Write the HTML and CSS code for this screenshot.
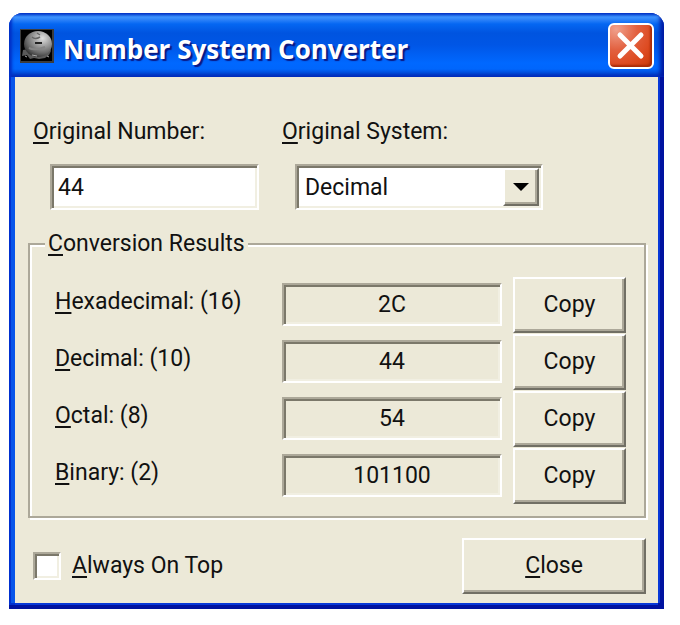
FILE: index.html
```html
<!DOCTYPE html>
<html lang="en">
<head>
  <meta charset="UTF-8">
  <title>Number System Converter</title>
  <meta name="viewport" content="width=device-width, initial-scale=1.0">
  <link rel="stylesheet" href="styles.css">
</head>
<body>
  <main class="window">
    <header class="titlebar">
      <svg class="app-icon" viewBox="0 0 34 34" aria-hidden="true">
        <defs>
          <radialGradient id="ball" cx="0.66" cy="0.28" r="0.75">
            <stop offset="0" stop-color="#e0e0e0"/>
            <stop offset="0.4" stop-color="#a0a0a0"/>
            <stop offset="0.75" stop-color="#6a6a6a"/>
            <stop offset="1" stop-color="#383838"/>
          </radialGradient>
        </defs>
        <rect width="34" height="34" fill="#3c3c3c"/>
        <rect x="1" y="1" width="31" height="31" fill="#000"/>
        <path d="M3 21 L2 27 L7 26 L10 30 L14 29 L19 30 L25 29 L29 26 L31 22 L29 16 Z" fill="#5a5a5a"/>
        <ellipse cx="18" cy="15" rx="14" ry="13" fill="url(#ball)"/>
        <path d="M12 8 Q15 11 20 8 M17 4 L20 6" fill="none" stroke="#666" stroke-width="1.5"/>
        <path d="M15 14 H22" stroke="#222" stroke-width="2"/>
        <path d="M9 19 Q15 22 25 18" fill="none" stroke="#858585" stroke-width="2"/>
        <path d="M5 27 L7 28 M12 26 L17 27 M27 27 L29 28" stroke="#aaa" stroke-width="1"/>
      </svg>
      <h1>Number System Converter</h1>
      <button type="button" class="close-box" aria-label="Close window">
        <svg viewBox="0 0 38 38" aria-hidden="true"><path d="M8 8 L29 29 M29 8 L8 29"/></svg>
      </button>
    </header>
    <form class="client">
      <div class="inputs">
        <div class="field">
          <label for="number"><u>O</u>riginal Number:</label>
          <input type="text" id="number" class="sunken" value="44">
        </div>
        <div class="field">
          <label for="system"><u>O</u>riginal System:</label>
          <div class="select-wrap sunken">
            <select id="system">
              <option>Hexadecimal</option>
              <option selected>Decimal</option>
              <option>Octal</option>
              <option>Binary</option>
            </select>
            <span class="arrow raised"><svg viewBox="0 0 16 8" aria-hidden="true"><path d="M0 0 H16 L8 8 Z"/></svg></span>
          </div>
        </div>
      </div>
      <fieldset>
        <legend><u>C</u>onversion Results</legend>
        <div class="result">
          <label for="hex"><u>H</u>exadecimal: (16)</label>
          <input type="text" id="hex" class="sunken" value="2C" readonly>
          <button type="button" class="raised">Copy</button>
        </div>
        <div class="result">
          <label for="dec"><u>D</u>ecimal: (10)</label>
          <input type="text" id="dec" class="sunken" value="44" readonly>
          <button type="button" class="raised">Copy</button>
        </div>
        <div class="result">
          <label for="oct"><u>O</u>ctal: (8)</label>
          <input type="text" id="oct" class="sunken" value="54" readonly>
          <button type="button" class="raised">Copy</button>
        </div>
        <div class="result">
          <label for="bin"><u>B</u>inary: (2)</label>
          <input type="text" id="bin" class="sunken" value="101100" readonly>
          <button type="button" class="raised">Copy</button>
        </div>
      </fieldset>
      <div class="footer">
        <input type="checkbox" id="ontop" class="sunken">
        <label for="ontop"><u>A</u>lways On Top</label>
        <button type="button" class="raised"><u>C</u>lose</button>
      </div>
    </form>
  </main>
</body>
</html>
```

FILE: styles.css
```css
* { box-sizing: border-box; }
body { margin: 0; padding: 13px 16px 16px 9px; background: #fff; font-family: Roboto, sans-serif; font-size: 23px; line-height: 28px; color: #111; }
input, select, button { font: inherit; color: inherit; border-radius: 0; margin: 0; }
u { text-decoration-thickness: 2px; text-underline-offset: 3px; }

.window { border-radius: 14px 14px 0 0; overflow: hidden; background: linear-gradient(90deg, #0030d0 50%, #0012a0 50%); border-bottom: 4px solid #0012a0; }

.titlebar { display: flex; align-items: center; height: 64px; padding: 2px 10px 0 11px; background: linear-gradient(#0a50e0 0, #3f96ff 4px, #2a80f8 7px, #0567f2 11px, #0054e0 20px, #0056e6 32px, #0068ff 50px, #0066fc 56px, #0044d0 61px, #0036c0 100%); box-shadow: inset 3px 0 3px #0030c8, inset -4px 0 4px #0018a0; }
.titlebar h1 { flex: 1; margin: 0 0 0 9px; padding-top: 5px; font-family: "Open Sans", sans-serif; font-size: 26px; line-height: 40px; font-weight: bold; color: #fff; text-shadow: 2px 2px 1px #0a1883; }
.app-icon { width: 34px; height: 34px; }
.close-box { width: 46px; height: 46px; padding: 2px; border: 2px solid #fff; border-radius: 6px; background: radial-gradient(circle at 15% 10%, #f0a08c 0, #e2603f 40%, #dd4a20 70%, #c83808 100%); box-shadow: inset -2px -2px 2px #a82c08; }
.close-box svg { display: block; width: 100%; }
.close-box path { stroke: #fff; stroke-width: 5; stroke-linecap: round; }

.client { margin: 0 6px 2px; padding: 41px 12px 9px 13px; background: #ece9d8; box-shadow: -4px 0 0 #0855ea, 2px 0 0 #0838d8, 0 2px 0 #0838d8; clip-path: inset(0 -6px -2px -6px); }

.sunken { border: 2px solid; border-color: #aca899 #fff #fff #aca899; box-shadow: inset 2px 2px 0 #7b786a, inset -2px -2px 0 #f1efe2; background: #fff; outline: none; }
.raised { border: 2px solid; border-color: #fff #716f64 #716f64 #fff; box-shadow: inset -2px -2px 0 #aca899; background: #ece9d8; }

.inputs { display: grid; grid-template-columns: 249fr 364fr; padding-left: 5px; }
.field { display: flex; flex-direction: column; gap: 18px; }
.field .sunken { height: 46px; margin-left: 17px; }
.field input { width: 84%; padding: 0 6px; }
.field .select-wrap { display: flex; position: relative; width: 68%; margin-left: 13px; }
select { flex: 1; appearance: none; border: 0; background: transparent; padding: 2px 8px 0; outline: none; }
.arrow { position: absolute; top: 2px; right: 2px; bottom: 2px; width: 36px; display: flex; align-items: center; justify-content: center; pointer-events: none; }
.arrow svg { width: 16px; height: 8px; }

fieldset { margin: 20px 0 0; padding: 18px 18px 12px 25px; border: 2px solid #aca899; box-shadow: inset 2px 2px 0 #fff, 2px 2px 0 #fff; min-width: 0; }
legend { margin-left: -10px; padding: 0 3px; background: #ece9d8; }
.result { display: grid; grid-template-columns: 227fr 220fr 124fr; align-items: center; height: 57px; }
.result label { padding-bottom: 6px; }
.result input { width: 100%; min-width: 0; height: 43px; text-align: center; background: #ece9d8; }
.result button { height: 56px; margin-left: 11px; }

.footer { display: flex; align-items: center; margin-top: 20px; padding-left: 5px; }
.footer input { appearance: none; width: 28px; height: 28px; }
.footer label { flex: 1; margin-left: 11px; }
.footer button { width: 30%; height: 56px; }
```
